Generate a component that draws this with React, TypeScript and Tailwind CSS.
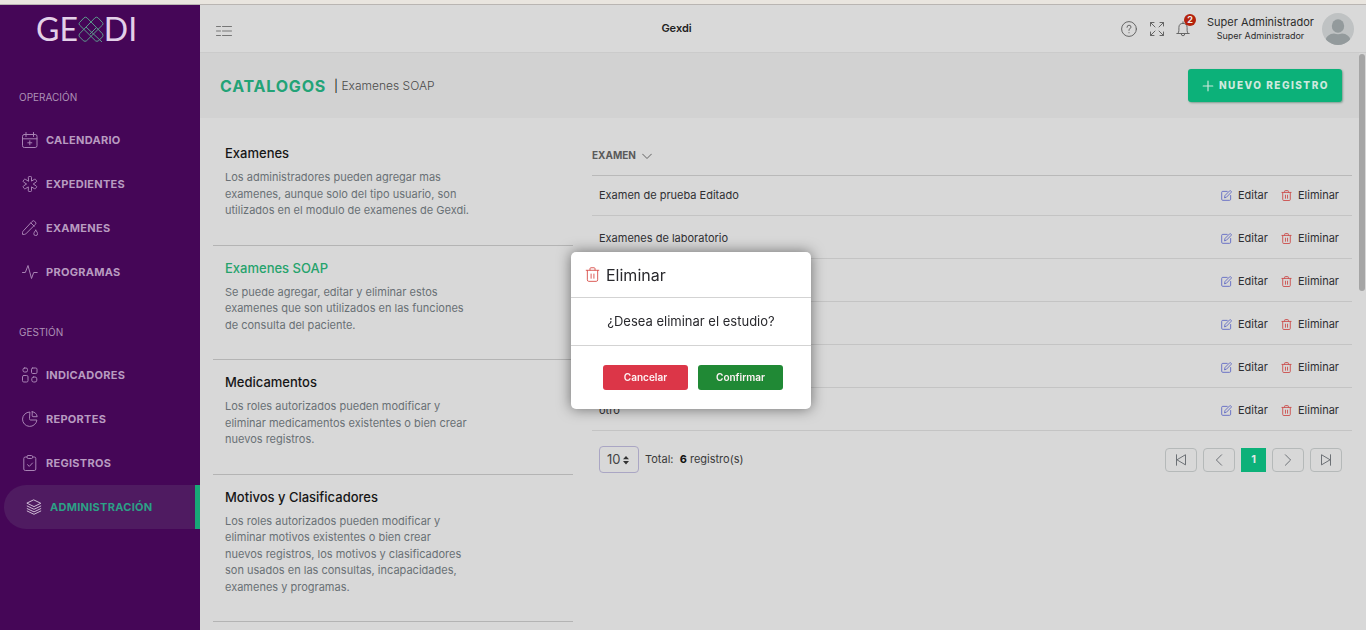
import type { ReactNode } from "react";

type IconProps = { className?: string };

function Icon({
  className = "size-4",
  children,
}: IconProps & { children: ReactNode }) {
  return (
    <svg
      viewBox="0 0 16 16"
      className={`flex-none ${className}`}
      fill="none"
      stroke="currentColor"
      strokeWidth={1}
      strokeLinecap="round"
      strokeLinejoin="round"
      aria-hidden="true"
    >
      {children}
    </svg>
  );
}

const CalendarIcon = () => (
  <Icon>
    <rect x="0.5" y="2.5" width="14.5" height="13" rx="1.8" />
    <path d="M.5 6.8H15M4 .5v4M11.5 .5v4M7.8 8.8v4M5.8 10.8h4" />
  </Icon>
);

const MedicalIcon = () => (
  <Icon>
    <path d="M6.3 1.3Q6.3.5 7.1.5h1.6q.8 0 .8.8v3.8l3-1.8q.8-.4 1.2.3l.8 1.2q.4.7-.3 1.2L11.2 8l3 1.9q.7.5.3 1.2l-.8 1.3q-.4.7-1.2.3l-3-1.8v3.8q0 .8-.8.8H7.1q-.8 0-.8-.8v-3.8l-3 1.8q-.8.4-1.2-.3l-.8-1.3q-.4-.7.3-1.2L4.6 8l-3-1.9q-.7-.5-.3-1.2l.8-1.3q.4-.7 1.2-.3l3 1.8z" />
  </Icon>
);

const TubeIcon = () => (
  <Icon>
    <path d="M10.3 1.2a1.500 1.500 0 0 1 2.200 0l.9.9a1.500 1.500 0 0 1 0 2.200L3.800 13.900a2 2 0 0 1-1.300.5H.5v-1.900q0-.8.6-1.400zM9 3l3.200 3.200" />
    <path d="M13.800 10.200q-2 2.300-2 3.500a1.900 1.900 0 0 0 3.800 0q0-1.200-1.800-3.500z" />
  </Icon>
);

const PulseIcon = () => (
  <Icon>
    <path d="M.5 8.500h2.800L6 1.500l3.500 13 2.200-6h3.500" />
  </Icon>
);

const GridIcon = () => (
  <Icon>
    <rect x="1" y="1" width="4.500" height="4" rx="1.500" />
    <rect x="9.500" y="1" width="5.500" height="5.500" rx="1.200" />
    <rect x=".5" y="8.500" width="5.500" height="6.500" rx="1.300" />
    <rect x="9.800" y="10" width="5" height="5" rx="1.800" />
  </Icon>
);

const PieIcon = () => (
  <Icon>
    <path d="M7.500 1a7.200 7.200 0 1 0 7.400 8H8.500q-1 0-1-1z" />
    <path d="M10.200.7v4.200q0 .8.8.8h4.200A6 6 0 0 0 10.200.7z" />
  </Icon>
);

const ClipboardIcon = () => (
  <Icon>
    <path d="M5 2H3.300q-1.500 0-1.500 1.500v10.500q0 1.500 1.500 1.500h9q1.500 0 1.500-1.500V3.500q0-1.500-1.500-1.500H10.600" />
    <rect x="5" y=".5" width="5.600" height="3" rx="1.200" />
    <path d="m5.500 9.700 1.800 1.700 3.200-3.400" />
  </Icon>
);

const LayersIcon = () => (
  <Icon>
    <path d="M8 1 14.800 4.300 8 7.600 1.200 4.300z" />
    <path d="m1.200 7 6.800 3.300L14.800 7M1.200 9.600 8 12.900l6.800-3.300M1.200 12 8 15.300l6.800-3.300" />
  </Icon>
);

const TrashIcon = ({ className }: IconProps) => (
  <Icon className={className}>
    <path d="M1.300 3.500h13.400M5.300 3.300V1.800q0-1 1-1h3.400q1 0 1 1v1.500M2.500 3.700v10q0 1.600 1.500 1.600h8q1.500 0 1.500-1.600v-10M6.500 7.500v4.500M9.500 7.500v4.500" />
  </Icon>
);

const EditIcon = ({ className }: IconProps) => (
  <Icon className={className}>
    <path d="M9 2H2.500Q1 2 1 3.500v10Q1 15 2.500 15h10q1.500 0 1.500-1.500V8" />
    <path d="m5.200 10.900.7-3L12.600 1.200q.8-.6 1.500 0l.7.700q.6.800 0 1.500L8.200 10.200z" />
  </Icon>
);

const MENU = [
  {
    titulo: "OPERACIÓN",
    items: [
      { nombre: "CALENDARIO", icono: <CalendarIcon /> },
      { nombre: "EXPEDIENTES", icono: <MedicalIcon /> },
      { nombre: "EXAMENES", icono: <TubeIcon /> },
      { nombre: "PROGRAMAS", icono: <PulseIcon /> },
    ],
  },
  {
    titulo: "GESTIÓN",
    items: [
      { nombre: "INDICADORES", icono: <GridIcon /> },
      { nombre: "REPORTES", icono: <PieIcon /> },
      { nombre: "REGISTROS", icono: <ClipboardIcon /> },
      { nombre: "ADMINISTRACIÓN", icono: <LayersIcon />, activo: true },
    ],
  },
];

const CATALOGOS = [
  {
    titulo: "Examenes",
    texto:
      "Los administradores pueden agregar mas examenes, aunque solo del tipo usuario, son utilizados en el modulo de examenes de Gexdi.",
  },
  {
    titulo: "Examenes SOAP",
    texto:
      "Se puede agregar, editar y eliminar estos examenes que son utilizados en las funciones de consulta del paciente.",
    activo: true,
  },
  {
    titulo: "Medicamentos",
    texto:
      "Los roles autorizados pueden modificar y eliminar medicamentos existentes o bien crear nuevos registros.",
  },
  {
    titulo: "Motivos y Clasificadores",
    texto:
      "Los roles autorizados pueden modificar y eliminar motivos existentes o bien crear nuevos registros, los motivos y clasificadores son usados en las consultas, incapacidades, examenes y programas.",
  },
];

const EXAMENES = [
  "Examen de prueba Editado",
  "Examenes de laboratorio",
  "",
  "",
  "",
  "otro",
];

function Logo() {
  return (
    <a
      href="#"
      className="flex h-12 items-center pl-9 font-[Lato,sans-serif] text-[32px] leading-none text-[#e3d0e8]"
    >
      GE
      <svg
        viewBox="0 0 26 26"
        className="w-[26px] flex-none"
        fill="none"
        stroke="#5c9c8c"
        strokeWidth={1}
        aria-hidden="true"
      >
        <path d="M1.500 6.500 6 1.800q1.500-1.200 3 0l15.500 16q1 1.500 0 3l-4 4q-1.500 1-3 0L1.500 9q-1-1.300 0-2.500z" />
        <path d="M24.500 6.500 20 1.800q-1.500-1.200-3 0L1.500 17.800q-1 1.500 0 3l4 4q1.500 1 3 0L24.500 9q1-1.300 0-2.500z" />
        <path d="m8 11 16 15M12 18l6-6" />
      </svg>
      DI
    </a>
  );
}

function Sidebar() {
  return (
    <aside className="w-[200px] flex-none bg-[#450657]">
      <Logo />
      <nav className="pt-1.5">
        {MENU.map((g) => (
          <section key={g.titulo} className="pt-[30px]">
            <h2 className="mb-[13px] pl-[19px] text-[10px] leading-4 text-[#ad92b6]">
              {g.titulo}
            </h2>
            {g.items.map((i) => (
              <a
                key={i.nombre}
                href="#"
                className={
                  i.activo
                    ? "ml-1 flex h-11 items-center gap-2 rounded-l-full border-r-5 border-[#17a877] bg-[#4f1b61] pl-[22px] text-[11px] font-bold tracking-wide text-[#2ca086]"
                    : "flex h-11 items-center gap-2 pl-[22px] text-[11px] font-bold tracking-wide text-[#b89bc0]"
                }
              >
                <span className={i.activo ? "text-[#cfbcd6]" : "text-[#a883b4]"}>
                  {i.icono}
                </span>
                {i.nombre}
              </a>
            ))}
          </section>
        ))}
      </nav>
    </aside>
  );
}

function Topbar() {
  return (
    <header className="flex h-12 items-center justify-between border-b border-[#cbcbcb] bg-[#d9d9d9] pr-3 pl-4">
      <button type="button" aria-label="Menú" className="pt-1 text-[#777]">
        <Icon>
          <path d="M.5 3.500h4M.5 8h4M.5 12.500h4M6.500 3.500h9M6.500 8h9M6.500 12.500h9" />
        </Icon>
      </button>
      <h1 className="text-[11px] font-semibold text-[#222]">Gexdi</h1>
      <div className="flex items-center text-[#666]">
        <button type="button" aria-label="Ayuda">
          <Icon>
            <circle cx="8" cy="8" r="7.400" />
            <path d="M6 6.300q0-2.100 2-2.100t2 1.900q0 1.200-2 2.300v1M8 11.600v.2" />
          </Icon>
        </button>
        <button type="button" aria-label="Pantalla completa" className="ml-3">
          <Icon>
            <path d="M1.500 5V1.500H5M1.500 1.500l4.500 4.500M11 1.500h3.500V5M14.500 1.500 10 6M1.500 11v3.500H5M1.500 14.500 6 10M11 14.500h3.500V11M14.500 14.500 10 10" />
          </Icon>
        </button>
        <button
          type="button"
          aria-label="Notificaciones"
          className="relative ml-2.5"
        >
          <Icon>
            <path d="M8 .8v1.400M1.800 12.500h12.400M3 12.300q.9-1 .9-3V6.500a4.100 4.100 0 0 1 8.200 0v2.800q0 2 .9 3M6.200 12.800q0 2 1.800 2t1.800-2" />
          </Icon>
          <span className="absolute -top-[7px] left-[9px] size-3 rounded-full bg-[#b4220c] text-[9px] leading-3 font-bold text-[#eee]">
            2
          </span>
        </button>
        <div className="ml-4 text-center text-[#2c2c2c]">
          <p className="text-[11px] leading-[14px]">Super Administrador</p>
          <p className="text-[9px] leading-[13px]">Super Administrador</p>
        </div>
        <svg viewBox="0 0 32 32" className="ml-2 size-8" aria-hidden="true">
          <clipPath id="avatar">
            <circle cx="16" cy="16" r="16" />
          </clipPath>
          <g clipPath="url(#avatar)">
            <path fill="#bfc2c3" d="M0 0h32v32H0z" />
            <ellipse cx="16" cy="13" rx="6.200" ry="6.800" fill="#939a9c" />
            <path
              fill="#939a9c"
              d="M3.500 27Q5 21 12 20.500q4 1.600 8 0Q27 21 28.500 27L24 32H8z"
            />
          </g>
        </svg>
      </div>
    </header>
  );
}

function Tabla() {
  return (
    <table className="w-full text-[11px] leading-[17px] text-[#2f2f33]">
      <thead>
        <tr className="border-b border-[#b9b9b9]">
          <th
            scope="col"
            colSpan={2}
            className="pt-[29px] pb-[11px] text-left text-[10px] font-bold text-[#5a5a5a]"
          >
            <button type="button" className="flex items-center gap-1.5">
              EXAMEN
              <Icon className="size-2.5">
                <path d="m1 5 7 7 7-7" strokeWidth={1.500} />
              </Icon>
            </button>
          </th>
        </tr>
      </thead>
      <tbody>
        {EXAMENES.map((nombre, i) => (
          <tr key={i} className="border-b border-[#c4c4c4]">
            <td className={i === 0 ? "py-[11px] pl-[7px]" : "pt-3.5 pb-[11px] pl-[7px]"}>
              {nombre}
            </td>
            <td className={i === 0 ? "py-[11px] pr-[13px]" : "pt-3.5 pb-[11px] pr-[13px]"}>
              <div className="flex justify-end gap-[13px]">
                <button type="button" className="flex items-center gap-1.5">
                  <span className="text-[#5f69c4]">
                    <EditIcon className="size-[11px] [stroke-width:1.3]" />
                  </span>
                  Editar
                </button>
                <button type="button" className="flex items-center gap-1.5">
                  <span className="text-[#cb4b49]">
                    <TrashIcon className="size-[11px] [stroke-width:1.3]" />
                  </span>
                  Eliminar
                </button>
              </div>
            </td>
          </tr>
        ))}
      </tbody>
    </table>
  );
}

function PagBtn({ label, children }: { label: string; children: ReactNode }) {
  return (
    <button
      type="button"
      aria-label={label}
      className="flex h-6 w-8 items-center justify-center rounded-sm border border-[#b5b9b9] text-[#6a6e73]"
    >
      <Icon className="size-3">{children}</Icon>
    </button>
  );
}

function Paginacion() {
  return (
    <div className="flex items-center justify-between pt-[15px] pr-2.5 pl-[7px] text-[11px] text-[#3a3a3a]">
      <div className="flex items-center">
        <div className="relative flex items-center">
          <select
            aria-label="Registros por página"
            defaultValue="10"
            className="h-[27px] w-10 appearance-none rounded-sm border border-[#aaa6c4] pl-[7px] text-[13px] text-[#444]"
          >
            <option>10</option>
          </select>
          <svg
            viewBox="0 0 6 10"
            className="pointer-events-none absolute right-2.5 h-2.5 w-1.5"
            fill="#333"
            aria-hidden="true"
          >
            <path d="m3 1 3 3.300H0zM3 9.400 0 6h6z" />
          </svg>
        </div>
        <p className="ml-1.5 whitespace-pre">
          Total:  <b className="font-bold text-[#111]">6</b> registro(s)
        </p>
      </div>
      <div className="flex items-center gap-1.5">
        <PagBtn label="Primera">
          <path d="M2 1v14M14 1.500v13L3 8z" strokeWidth={1.300} />
        </PagBtn>
        <PagBtn label="Anterior">
          <path d="m11.500 1-7 7 7 7" strokeWidth={1.300} />
        </PagBtn>
        <button
          type="button"
          aria-current="page"
          className="h-6 w-[25px] bg-[#0cb179] text-[11px] font-bold text-[#e0e8e4]"
        >
          1
        </button>
        <PagBtn label="Siguiente">
          <path d="m4.500 1 7 7-7 7" strokeWidth={1.300} />
        </PagBtn>
        <PagBtn label="Última">
          <path d="M14 1v14M2 1.500v13L13 8z" strokeWidth={1.300} />
        </PagBtn>
      </div>
    </div>
  );
}

function DialogoEliminar() {
  return (
    <div className="fixed inset-0 flex items-center justify-center pt-[31px] pl-3.5">
      <div
        role="dialog"
        aria-modal="true"
        aria-labelledby="titulo-eliminar"
        className="w-60 rounded-[5px] bg-white text-[#29292d] shadow-[0_0_14px_rgba(0,0,0,0.5)]"
      >
        <div className="flex h-[46px] items-center gap-1.5 border-b border-[#d3d3d3] pl-3.5">
          <span className="text-[#d9534f]">
            <TrashIcon className="size-[15px]" />
          </span>
          <h2 id="titulo-eliminar" className="text-base">
            Eliminar
          </h2>
        </div>
        <p className="flex h-12 items-center justify-center border-b border-[#d3d3d3] text-[13px]">
          ¿Desea eliminar el estudio?
        </p>
        <div className="flex justify-center gap-2.5 pt-[19px] pb-[19px] pl-1 text-[10px] font-semibold text-[#fdf3f4]">
          <button type="button" className="h-[25px] w-[85px] rounded-[3px] bg-[#dc3648]">
            Cancelar
          </button>
          <button type="button" className="h-[25px] w-[85px] rounded-[3px] bg-[#208935]">
            Confirmar
          </button>
        </div>
      </div>
    </div>
  );
}

export default function App() {
  return (
    <div className="flex h-screen flex-col overflow-hidden bg-white pr-0.5 font-[Inter,sans-serif]">
      <div className="h-[5px] flex-none border-b border-[#b9b5b2] bg-[#e9e5df]" />
      <div className="flex min-h-0 flex-1">
        <Sidebar />
        <div className="flex min-w-0 flex-1 flex-col bg-[#d8d8d8]">
          <Topbar />
          <div className="flex min-h-0 flex-1">
            <main className="min-w-0 flex-1">
              <div className="flex h-[65px] items-center justify-between bg-[#d2d2d2] pr-[17px] pl-5">
                <div className="flex items-center gap-2">
                  <h2 className="text-base font-bold tracking-wider text-[#23a377]">
                    CATALOGOS
                  </h2>
                  <span className="text-xs font-light text-[#4b4b4b]">
                    <span className="font-normal text-[#222]">|</span> Examenes SOAP
                  </span>
                </div>
                <button
                  type="button"
                  className="flex h-[33px] items-center gap-1 rounded-[3px] bg-[#0cb179] px-[13px] text-[10px] font-extrabold tracking-[1.5px] text-[#cfe9de] shadow-[1px_1px_2px_rgba(0,80,50,0.4)]"
                >
                  <Icon className="size-3.5">
                    <path d="M8 2.500v11M2.500 8h11" strokeWidth={1.300} />
                  </Icon>
                  NUEVO REGISTRO
                </button>
              </div>
              <div className="flex gap-[19px] pr-[7px] pl-[13px]">
                <div className="w-[360px] flex-none pt-[13px]">
                  {CATALOGOS.map((c) => (
                    <a
                      key={c.titulo}
                      href="#"
                      className="block border-b border-[#b4b4b4] pt-3 pb-[26px] pl-3"
                    >
                      <h3
                        className={
                          c.activo
                            ? "mb-1.5 text-[13px] leading-5 font-medium text-[#25a36c]"
                            : "mb-1.5 text-[13px] leading-5 font-medium text-[#161616]"
                        }
                      >
                        {c.titulo}
                      </h3>
                      <p className="max-w-[246px] text-[11px] leading-normal text-[#697075]">
                        {c.texto}
                      </p>
                    </a>
                  ))}
                </div>
                <div className="min-w-0 flex-1">
                  <Tabla />
                  <Paginacion />
                </div>
              </div>
            </main>
            <div className="w-[7px] flex-none pt-px">
              <div className="h-[237px] w-1.5 rounded-full bg-[#a5a5a5]" />
            </div>
          </div>
        </div>
      </div>
      <DialogoEliminar />
    </div>
  );
}
